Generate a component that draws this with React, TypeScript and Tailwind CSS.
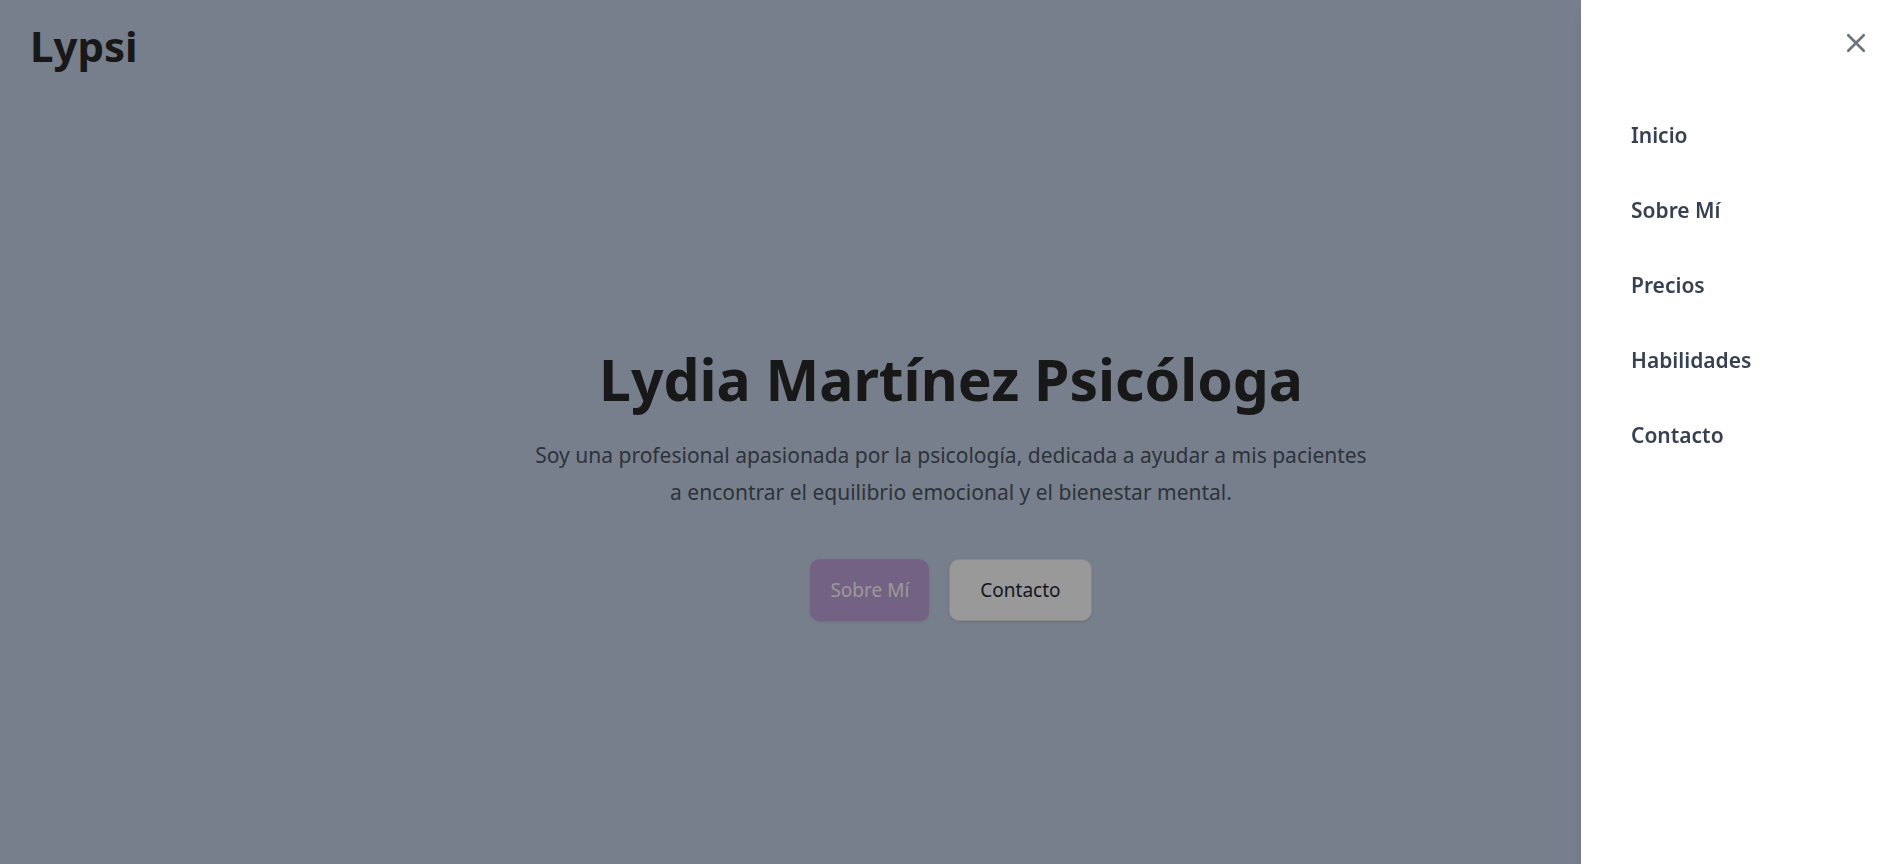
import { useState } from "react";

const links = [
  { label: "Inicio", href: "#inicio" },
  { label: "Sobre Mí", href: "#sobre-mi" },
  { label: "Precios", href: "#precios" },
  { label: "Habilidades", href: "#habilidades" },
  { label: "Contacto", href: "#contacto" },
];

function Header() {
  return (
    <header className="px-[30px] pt-4">
      <a href="#inicio" className="text-[42px] leading-[60px] font-bold text-[#282828]">
        Lypsi
      </a>
    </header>
  );
}

function Hero() {
  return (
    <main id="inicio" className="flex flex-1 flex-col items-center pt-[265px] pl-1 text-center">
      <h1 className="text-[57px] leading-[76px] font-bold text-[#282828]">Lydia Martínez Psicóloga</h1>
      <p className="mt-5 max-w-[844px] text-[21px] leading-[37px] text-[#4b5563]">
        Soy una profesional apasionada por la psicología, dedicada a ayudar a mis pacientes a encontrar el equilibrio
        emocional y el bienestar mental.
      </p>
      <div className="mt-12 flex items-center gap-5">
        <button type="button" className="h-[62px] rounded-[10px] bg-[#c1a3dc] px-5 text-[19px] text-white shadow-sm">
          Sobre Mí
        </button>
        <button
          type="button"
          className="h-[62px] rounded-[10px] border border-[#e5e7eb] bg-white px-[30px] text-[19px] text-[#1f2937] shadow-sm"
        >
          Contacto
        </button>
      </div>
    </main>
  );
}

function Drawer({ onClose }: { onClose: () => void }) {
  return (
    <>
      <div className="fixed inset-0 bg-black/40" onClick={onClose} />
      <aside className="fixed inset-y-0 right-0 w-[317px] bg-white shadow-lg">
        <div className="flex justify-end px-[26px] pt-[27px]">
          <button type="button" aria-label="Cerrar menú" onClick={onClose} className="text-[#6b7280]">
            <svg className="size-8" viewBox="0 0 24 24" fill="none" stroke="currentColor" strokeWidth="2" strokeLinecap="round">
              <path d="M6.2 6.2l11.6 11.6M17.8 6.2L6.2 17.8" />
            </svg>
          </button>
        </div>
        <nav className="flex flex-col items-start gap-[39px] px-[50px] pt-[58px]">
          {links.map((link) => (
            <a key={link.href} href={link.href} className="text-[21px] leading-[36px] font-semibold text-[#374151]">
              {link.label}
            </a>
          ))}
        </nav>
      </aside>
    </>
  );
}

export default function App() {
  const [open, setOpen] = useState(true);
  return (
    <div className="flex min-h-screen flex-col bg-[#c8d4e9] font-['Noto_Sans',sans-serif]">
      <Header />
      <Hero />
      {open && <Drawer onClose={() => setOpen(false)} />}
    </div>
  );
}
